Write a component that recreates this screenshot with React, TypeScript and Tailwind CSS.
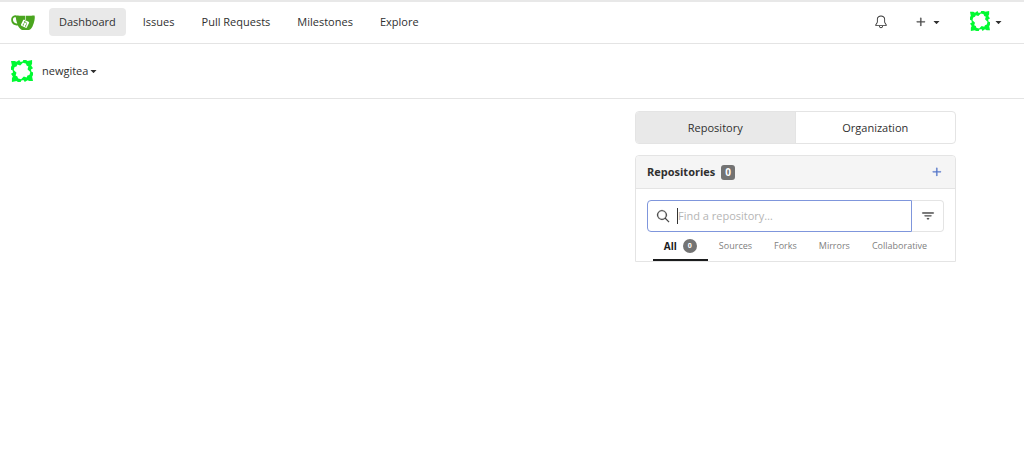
import { GoBell, GoFilter, GoPlus, GoSearch, GoTriangleDown } from 'react-icons/go';

const navItems = [
  { href: '#dashboard', label: 'Dashboard', active: true },
  { href: '#issues', label: 'Issues' },
  { href: '#pulls', label: 'Pull Requests' },
  { href: '#milestones', label: 'Milestones' },
  { href: '#explore', label: 'Explore' },
];

const repoFilters = [
  { href: '#all', label: 'All', count: 0 },
  { href: '#sources', label: 'Sources' },
  { href: '#forks', label: 'Forks' },
  { href: '#mirrors', label: 'Mirrors' },
  { href: '#collaborative', label: 'Collaborative' },
];

function Logo() {
  return (
    <svg viewBox="0 0 640 640" className="size-6" fill="#4aa51f" aria-hidden="true">
      <path
        fill="#fff"
        d="m395.9 484.2-126.9-61c-12.5-6-17.9-21.2-11.8-33.8l61-126.9c6-12.5 21.2-17.9 33.8-11.8 17.2 8.3 27.1 13 27.1 13l-.1-109.2 16.7-.1.1 117.1s57.4 24.2 83.1 40.1c3.7 2.3 10.2 6.8 12.9 14.4 2.1 6.1 2 13.1-1 19.3l-61 126.9c-6.2 12.7-21.4 18.1-33.9 12"
      />
      <path d="M622.7 149.8c-4.1-4.1-9.6-4-9.6-4s-117.2 6.6-177.9 8c-13.3.3-26.5.6-39.6.7v117.2c-5.5-2.6-11.1-5.3-16.6-7.9 0-36.4-.1-109.2-.1-109.2-29 .4-89.2-2.2-89.2-2.2s-141.4-7.1-156.8-8.5c-9.8-.6-22.5-2.1-39 1.5-8.7 1.8-33.5 7.4-53.8 26.9C-4.9 212.4 6.6 276.2 8 285.8c1.7 11.7 6.9 44.2 31.7 72.5 45.8 56.1 144.4 54.8 144.4 54.8s12.1 28.9 30.6 55.5c25 33.1 50.7 58.9 75.7 62 63 0 188.9-.1 188.9-.1s12 .1 28.3-10.3c14-8.5 26.5-23.4 26.5-23.4s12.9-13.8 30.9-45.3c5.5-9.7 10.1-19.1 14.1-28 0 0 55.2-117.1 55.2-231.1-1.1-34.5-9.6-40.6-11.6-42.6M125.6 353.9c-25.9-8.5-36.9-18.7-36.9-18.7S69.6 321.8 60 295.4c-16.5-44.2-1.4-71.2-1.4-71.2s8.4-22.5 38.5-30c13.8-3.7 31-3.1 31-3.1s7.1 59.4 15.7 94.2c7.2 29.2 24.8 77.7 24.8 77.7s-26.1-3.1-43-9.1m300.3 107.6s-6.1 14.5-19.6 15.4c-5.8.4-10.3-1.2-10.3-1.2s-.3-.1-5.3-2.1l-112.9-55s-10.9-5.7-12.8-15.6c-2.2-8.1 2.7-18.1 2.7-18.1L322 273s4.8-9.7 12.2-13c.6-.3 2.3-1 4.5-1.5 8.1-2.1 18 2.8 18 2.8L467.4 315.1s12.6 5.7 15.3 16.2c1.9 7.4-.5 14-1.8 17.2-6.3 15.4-55 113.1-55 113.1" />
      <path d="M326.8 380.1c-8.2.1-15.4 5.8-17.3 13.8s2 16.3 9.1 20c7.7 4 17.5 1.8 22.7-5.4 5.1-7.1 4.3-16.9-1.8-23.1l24-49.1c1.5.1 3.7.2 6.2-.5 4.1-.9 7.1-3.6 7.1-3.6 4.2 1.8 8.6 3.8 13.2 6.1 4.8 2.4 9.3 4.9 13.4 7.3.9.5 1.8 1.1 2.8 1.9 1.6 1.3 3.4 3.1 4.7 5.5 1.9 5.5-1.9 14.9-1.9 14.9-2.3 7.6-18.4 40.6-18.4 40.6-8.1-.2-15.3 5-17.7 12.5-2.6 8.1 1.1 17.3 8.9 21.3s17.4 1.7 22.5-5.3c5-6.8 4.6-16.3-1.1-22.6 1.9-3.7 3.7-7.4 5.6-11.3 5-10.4 13.5-30.4 13.5-30.4.9-1.7 5.7-10.3 2.7-21.3-2.5-11.4-12.6-16.7-12.6-16.7-12.2-7.9-29.2-15.2-29.2-15.2s0-4.1-1.1-7.1c-1.1-3.1-2.8-5.1-3.9-6.3 4.7-9.7 9.4-19.3 14.1-29-4.1-2-8.1-4-12.2-6.1-4.8 9.8-9.7 19.7-14.5 29.5-6.7-.1-12.9 3.5-16.1 9.4-3.4 6.3-2.7 14.1 1.9 19.8z" />
    </svg>
  );
}

// One side of the identicon, repeated at each quarter turn
function Avatar({ className }: { className: string }) {
  return (
    <svg viewBox="0 0 24 24" className={className} fill="#00fa32" aria-hidden="true">
      {[0, 90, 180, 270].map((angle) => (
        <g key={angle} transform={`rotate(${angle} 12 12)`}>
          <path d="M0 1h4l2 1 3-2 1 2h2l3-2 3 1-1 3-4-1-3 3-3-1-1 2-3 1-2 3-2-1 2-4z" />
        </g>
      ))}
    </svg>
  );
}

function Navbar() {
  return (
    <header className="flex h-[44px] items-center justify-between border-t-2 border-b border-t-[#e8e8e8] border-b-[#e4e4e4] pr-5 pb-px pl-[11px]">
      <nav className="flex items-center gap-[14px]">
        <a href="#home" aria-label="Home">
          <Logo />
        </a>
        <div className="flex items-center gap-[7px]">
          {navItems.map((item) => (
            <a
              key={item.label}
              href={item.href}
              className={`rounded px-[10px] py-[6px] leading-4 ${item.active ? 'bg-[#e9e9e9]' : ''}`}
            >
              {item.label}
            </a>
          ))}
        </div>
      </nav>
      <div className="flex items-center">
        <button aria-label="Notifications" className="mr-[26px]">
          <GoBell className="size-[14px]" />
        </button>
        <button aria-label="Create" className="mr-7 flex items-center gap-[3px]">
          <GoPlus className="size-[14px]" strokeWidth={0.5} />
          <GoTriangleDown className="size-[11px]" />
        </button>
        <button aria-label="Profile" className="flex items-center gap-[3px]">
          <Avatar className="mb-[3px] size-5" />
          <GoTriangleDown className="size-[11px]" />
        </button>
      </div>
    </header>
  );
}

function RepoPanel() {
  return (
    <section className="rounded-t border border-[#e4e4e4]">
      <div className="flex h-[33px] items-center justify-between rounded-t border-b border-[#e4e4e4] bg-[#f5f5f5] px-[11px]">
        <h2 className="flex items-center gap-[6px] font-bold">
          Repositories
          <span className="rounded-[3px] bg-[#737373] px-1 text-[10px] leading-[15px] text-white">0</span>
        </h2>
        <a href="#new" aria-label="New Repository">
          <GoPlus className="size-[14px] text-[#4066c4]" strokeWidth={0.5} />
        </a>
      </div>
      <div className="px-[11px] pt-[11px]">
        <div className="flex h-8">
          <label className="flex flex-1 items-center gap-[7px] rounded-l border border-[#7f96dc] pl-2">
            <GoSearch className="size-[14px]" strokeWidth={0.5} />
            <input
              type="text"
              aria-label="Find a repository"
              placeholder="Find a repository…"
              className="min-w-0 flex-1 border-l border-[#333] outline-none placeholder:text-[#b5b5b5]"
            />
          </label>
          <button aria-label="Filter" className="flex w-8 items-center justify-center rounded-r border border-l-0 border-[#e4e4e4]">
            <GoFilter className="size-[14px]" strokeWidth={0.5} />
          </button>
        </div>
        <nav className="flex justify-center text-[9px] text-[#808080]">
          {repoFilters.map((filter) => (
            <a
              key={filter.label}
              href={filter.href}
              className={`flex h-[29px] items-center gap-[6px] border-b-2 px-[11px] ${
                filter.count !== undefined
                  ? 'border-[#1b1c1d] text-[10px] font-bold text-[#1b1c1d]'
                  : 'border-transparent'
              }`}
            >
              {filter.label}
              {filter.count !== undefined && (
                <span className="flex size-[14px] items-center justify-center rounded-full bg-[#737373] text-[7px] text-white">
                  {filter.count}
                </span>
              )}
            </a>
          ))}
        </nav>
      </div>
    </section>
  );
}

export default function App() {
  return (
    <div className="min-h-screen bg-white font-['Open_Sans','Noto_Sans',sans-serif] text-[11px] leading-4 text-[#303030]">
      <Navbar />
      <div className="flex h-[55px] items-center border-b border-[#e4e4e4] px-[11px]">
        <button className="flex items-center">
          <Avatar className="mr-[9px] size-[22px]" />
          newgitea
          <GoTriangleDown className="size-[11px]" />
        </button>
      </div>
      <main className="mx-auto flex max-w-[888px] justify-end pt-3">
        <div className="w-[321px]">
          <div className="mb-[11px] grid h-[33px] grid-cols-2 overflow-hidden rounded border border-[#e4e4e4]">
            <button className="border-r border-[#e4e4e4] bg-[#e9e9e9]">Repository</button>
            <button>Organization</button>
          </div>
          <RepoPanel />
        </div>
      </main>
    </div>
  );
}
